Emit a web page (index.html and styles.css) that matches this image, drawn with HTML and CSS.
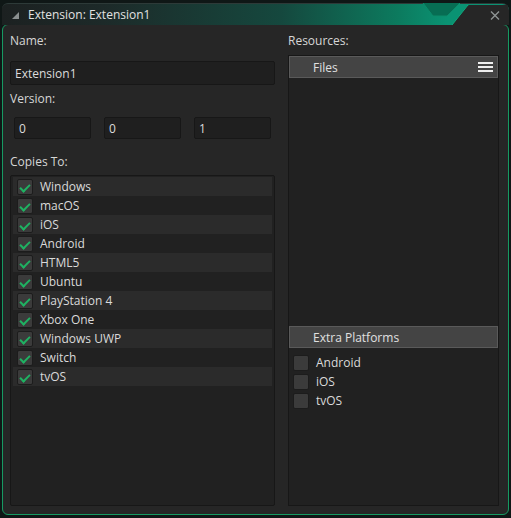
FILE: index.html
```html
<!DOCTYPE html>
<html lang="en">
<head>
    <meta charset="UTF-8">
    <title>Extension: Extension1</title>
    <link rel="stylesheet" href="styles.css">
</head>
<body>
    <div class="window">
        <div class="titlebar">
            <svg class="collapse" width="7" height="7" viewBox="0 0 7 7"><polygon points="7,0 7,7 0,7" fill="#8a8f8f"/></svg>
            <span class="title">Extension: Extension1</span>
            <svg class="notch" width="90" height="22" viewBox="0 0 90 22">
                <polygon points="4,0 41,0 28,13 14,13" fill="#076d53"/>
                <polyline points="4,0 14,13 28,13 41,0" fill="none" stroke="#0c8c6b" stroke-width="1"/>
                <polygon points="33,22 48,3 50,2 90,2 90,22" fill="#262626"/>
                <line x1="33" y1="22" x2="49" y2="2" stroke="#10a87e" stroke-width="1"/>
                <path d="M72 8.5 L80 16.5 M80 8.5 L72 16.5" stroke="#8e9494" stroke-width="1.4"/>
            </svg>
        </div>
        <div class="panel">
            <div class="col-left">
                <div class="label">Name:</div>
                <div class="input name-input">Extension1</div>
                <div class="label version-label">Version:</div>
                <div class="version-row">
                    <div class="input small">0</div>
                    <div class="input small">0</div>
                    <div class="input small">1</div>
                </div>
                <div class="label copies-label">Copies To:</div>
                <div class="list">
                    <div class="row"><span class="check on"></span>Windows</div>
                    <div class="row"><span class="check on"></span>macOS</div>
                    <div class="row"><span class="check on"></span>iOS</div>
                    <div class="row"><span class="check on"></span>Android</div>
                    <div class="row"><span class="check on"></span>HTML5</div>
                    <div class="row"><span class="check on"></span>Ubuntu</div>
                    <div class="row"><span class="check on"></span>PlayStation 4</div>
                    <div class="row"><span class="check on"></span>Xbox One</div>
                    <div class="row"><span class="check on"></span>Windows UWP</div>
                    <div class="row"><span class="check on"></span>Switch</div>
                    <div class="row"><span class="check on"></span>tvOS</div>
                </div>
            </div>
            <div class="col-right">
                <div class="label">Resources:</div>
                <div class="files">
                    <div class="header">
                        <span>Files</span>
                        <svg width="15" height="12" viewBox="0 0 15 12"><rect x="0" y="1" width="15" height="2" fill="#eee"/><rect x="0" y="5" width="15" height="2" fill="#eee"/><rect x="0" y="9" width="15" height="2" fill="#eee"/></svg>
                    </div>
                    <div class="files-body"></div>
                    <div class="header extra"><span>Extra Platforms</span></div>
                    <div class="extra-list">
                        <div class="row plain"><span class="check"></span>Android</div>
                        <div class="row plain"><span class="check"></span>iOS</div>
                        <div class="row plain"><span class="check"></span>tvOS</div>
                    </div>
                </div>
            </div>
        </div>
    </div>
</body>
</html>
```

FILE: styles.css
```css
* {
    margin: 0;
    padding: 0;
    box-sizing: border-box;
}

body {
    font-family: "Open Sans", "Liberation Sans", sans-serif;
    font-size: 12px;
    color: #d6d6d6;
    background: #0f1716;
    width: 511px;
    height: 518px;
    overflow: hidden;
}

.window {
    margin: 3px 2px 3px 2px;
    height: 512px;
    display: flex;
    flex-direction: column;
}

.titlebar {
    height: 22px;
    position: relative;
    display: flex;
    align-items: center;
    padding-left: 10px;
    border-radius: 6px 7px 0 0;
    background: linear-gradient(90deg, #1c2121 0%, #1d2a29 20%, #15483e 55%, #0c7a5e 78%, #0a9373 88%);
    border-top: 1px solid #2d3a38;
}

.collapse {
    margin-top: 1px;
}

.title {
    margin-left: 9px;
    color: #e2e2e2;
    font-size: 12px;
}

.notch {
    position: absolute;
    right: 0;
    top: -1px;
    border-top-right-radius: 7px;
}

.panel {
    flex: 1;
    display: flex;
    gap: 13px;
    padding: 8px 9px 8px 7px;
    background: #262626;
    border: 1px solid #169a62;
    border-radius: 6px;
    margin-top: -1px;
}

.col-left {
    width: 265px;
    display: flex;
    flex-direction: column;
}

.col-right {
    flex: 1;
    display: flex;
    flex-direction: column;
}

.label {
    height: 16px;
    line-height: 16px;
    color: #d6d6d6;
}

.input {
    background: #1f1f1f;
    border: 1px solid #171717;
    border-radius: 2px;
    display: flex;
    align-items: center;
    padding-left: 4px;
    color: #dcdcdc;
}

.name-input {
    margin-top: 12px;
    height: 24px;
}

.version-label {
    margin-top: 6px;
}

.version-row {
    margin-top: 10px;
    display: flex;
    gap: 13px;
    padding-left: 4px;
}

.input.small {
    width: 77px;
    height: 22px;
}

.copies-label {
    margin-top: 15px;
}

.list {
    margin-top: 5px;
    flex: 1;
    background: #212121;
    border: 1px solid #171717;
    border-radius: 2px;
    padding: 1px 2px;
}

.row {
    height: 19px;
    display: flex;
    align-items: center;
    padding-left: 4px;
    color: #dadada;
}

.list .row:nth-child(odd) {
    background: #2b2b2b;
}

.check {
    width: 16px;
    height: 16px;
    margin-right: 7px;
    background: #3b3b3b;
    border: 1px solid #1c1c1c;
    border-radius: 2px;
    position: relative;
}

.check.on::after {
    content: '';
    position: absolute;
    left: 4px;
    top: 2px;
    width: 4px;
    height: 8px;
    border-right: 2px solid #1fb262;
    border-bottom: 2px solid #1fb262;
    transform: rotate(45deg);
}

.files {
    margin-top: 6px;
    flex: 1;
    display: flex;
    flex-direction: column;
    background: #212121;
    border: 1px solid #171717;
}

.header {
    height: 22px;
    display: flex;
    align-items: center;
    justify-content: space-between;
    padding: 0 4px 0 23px;
    background: #444444;
    border: 1px solid #5a5a5a;
    color: #e0e0e0;
}

.files-body {
    height: 248px;
}

.extra-list {
    padding-top: 5px;
}

.row.plain {
    padding-left: 4px;
}
```
